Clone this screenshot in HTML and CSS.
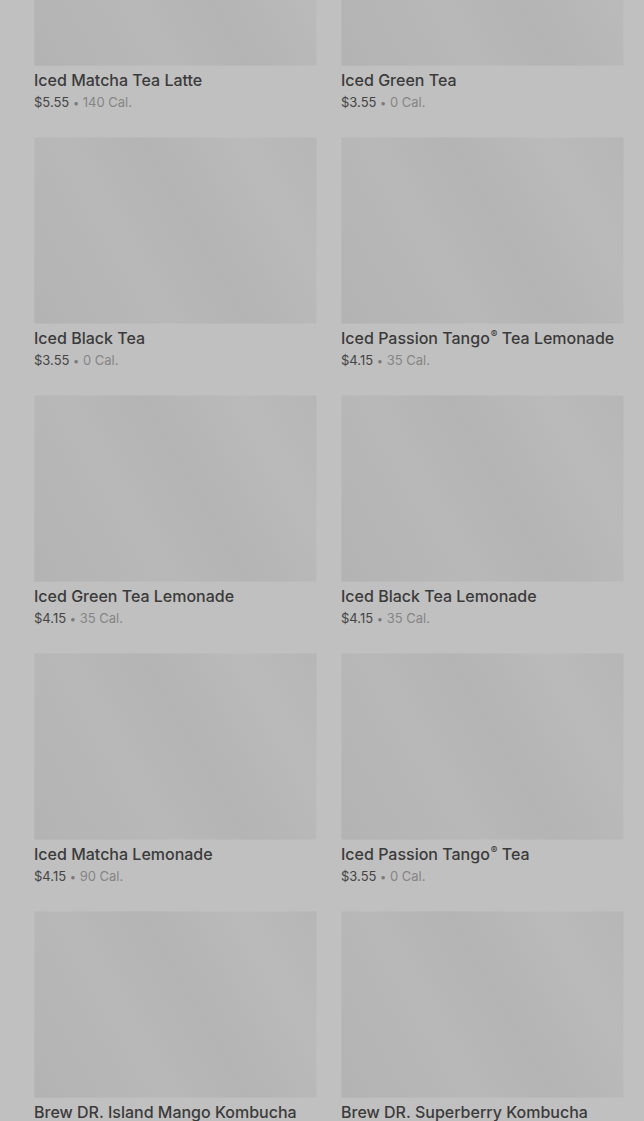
FILE: index.html
```html
<!DOCTYPE html>
<html lang="en">
<head>
<meta charset="utf-8">
<title>Menu</title>
<link rel="stylesheet" href="styles.css">
</head>
<body>
<main class="page">
  <div class="grid">
    <article class="card"><div class="thumb"></div><h3 class="name">Iced Matcha Tea Latte</h3><p class="meta"><span class="price">$5.55</span> <span class="dot">•</span> <span class="cal">140 Cal.</span></p></article>
    <article class="card"><div class="thumb"></div><h3 class="name">Iced Green Tea</h3><p class="meta"><span class="price">$3.55</span> <span class="dot">•</span> <span class="cal">0 Cal.</span></p></article>
    <article class="card"><div class="thumb"></div><h3 class="name">Iced Black Tea</h3><p class="meta"><span class="price">$3.55</span> <span class="dot">•</span> <span class="cal">0 Cal.</span></p></article>
    <article class="card"><div class="thumb"></div><h3 class="name">Iced Passion Tango<sup class="reg">®</sup> Tea Lemonade</h3><p class="meta"><span class="price">$4.15</span> <span class="dot">•</span> <span class="cal">35 Cal.</span></p></article>
    <article class="card"><div class="thumb"></div><h3 class="name">Iced Green Tea Lemonade</h3><p class="meta"><span class="price">$4.15</span> <span class="dot">•</span> <span class="cal">35 Cal.</span></p></article>
    <article class="card"><div class="thumb"></div><h3 class="name">Iced Black Tea Lemonade</h3><p class="meta"><span class="price">$4.15</span> <span class="dot">•</span> <span class="cal">35 Cal.</span></p></article>
    <article class="card"><div class="thumb"></div><h3 class="name">Iced Matcha Lemonade</h3><p class="meta"><span class="price">$4.15</span> <span class="dot">•</span> <span class="cal">90 Cal.</span></p></article>
    <article class="card"><div class="thumb"></div><h3 class="name">Iced Passion Tango<sup class="reg">®</sup> Tea</h3><p class="meta"><span class="price">$3.55</span> <span class="dot">•</span> <span class="cal">0 Cal.</span></p></article>
    <article class="card"><div class="thumb"></div><h3 class="name">Brew DR. Island Mango Kombucha</h3><p class="meta"><span class="price">$4.95</span> <span class="dot">•</span> <span class="cal">30 Cal.</span></p></article>
    <article class="card"><div class="thumb"></div><h3 class="name">Brew DR. Superberry Kombucha</h3><p class="meta"><span class="price">$4.95</span> <span class="dot">•</span> <span class="cal">30 Cal.</span></p></article>
  </div>
</main>
</body>
</html>
```
FILE: styles.css
```css
html, body {
  margin: 0;
  padding: 0;
  background: #c0c0c0;
  overflow: hidden;
  height: 1121px;
}
body {
  font-family: Inter, "Noto Sans", sans-serif;
  color: #3a3a3a;
}
.page {
  padding: 0 20px 0 34px;
}
.grid {
  margin-top: -121px;
  display: grid;
  grid-template-columns: 283px 283px;
  column-gap: 24px;
  row-gap: 24px;
}
.card {
  display: flex;
  flex-direction: column;
}
.thumb {
  height: 187px;
  border-radius: 2px;
  background: linear-gradient(60deg, #b3b3b3 0%, #b8b8b8 35%, #b4b4b4 55%, #bababa 80%, #b6b6b6 100%);
  box-shadow: inset 0 0 0 1px rgba(255,255,255,0.06);
}
.name {
  margin: 3px 0 0;
  height: 22px;
  font-size: 16px;
  line-height: 22px;
  font-weight: 500;
  color: #3b3b3b;
  white-space: nowrap;
}
.reg {
  font-size: 10px;
  line-height: 0;
  vertical-align: 6px;
  margin-left: 1px;
}
.meta {
  margin: 0;
  height: 22px;
  font-size: 13px;
  line-height: 22px;
  color: #858585;
}
.price { color: #454545; }
.dot { color: #7a7a7a; font-size: 11px; }
```
